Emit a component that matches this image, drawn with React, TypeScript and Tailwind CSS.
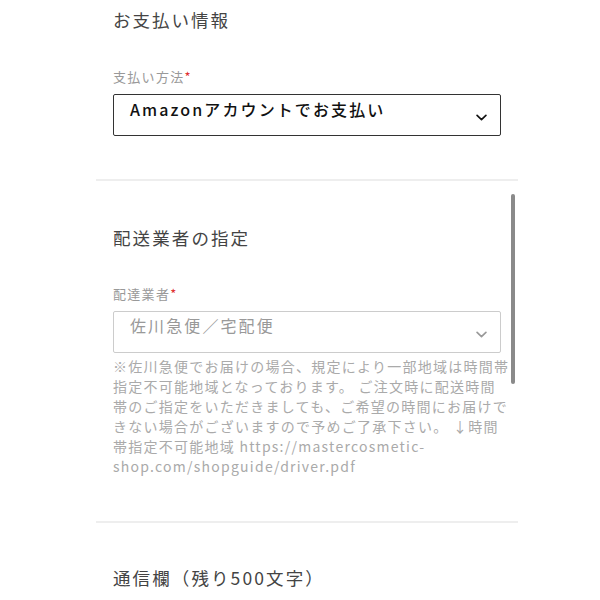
const Chevron = ({ className }: { className: string }) => (
  <svg viewBox="0 0 12 7" width="11" height="7" fill="none" className={className}>
    <path d="M1.2 1.2l4.8 4.6 4.8-4.6" stroke="currentColor" strokeWidth="1.8" strokeLinecap="round" strokeLinejoin="round" />
  </svg>
);

const Required = () => <span className="text-[#e03131]">*</span>;

export default function App() {
  return (
    <div
      className="relative h-[600px] w-[600px] overflow-hidden bg-white text-[#444]"
      style={{ fontFamily: '"Noto Sans CJK JP", "Noto Sans", sans-serif' }}
    >
      <div className="ml-[96px] w-[422px]">
        {/* payment */}
        <section className="px-[17px] pt-[8px] pb-[43px]">
          <h2 className="text-[17.5px] leading-[24px] tracking-[2px] text-[#444]">お支払い情報</h2>
          <div className="mt-[36px] text-[13px] leading-[18px] tracking-[0.1em] text-[#999]">
            支払い方法<Required />
          </div>
          <div className="mt-[8px] flex h-[42px] items-start justify-between rounded-[2px] border border-[#333] pl-[16px] pr-[13px]">
            <span className="pt-[2px] text-[16px] font-medium leading-[24px] tracking-[2.1px] text-[#111]">
              Amazonアカウントでお支払い
            </span>
            <Chevron className="self-center mt-[4px] text-[#111]" />
          </div>
        </section>

        <div className="h-[2px] bg-[#eeeeee]" />

        {/* delivery */}
        <section className="px-[17px] pt-[45px] pb-[45px]">
          <h2 className="text-[17.5px] leading-[24px] tracking-[2.1px] text-[#444]">配送業者の指定</h2>
          <div className="mt-[35px] text-[13px] leading-[18px] tracking-[0.1em] text-[#999]">
            配達業者<Required />
          </div>
          <div className="mt-[8px] flex h-[42px] items-start justify-between rounded-[2px] border border-[#ccc] pl-[16px] pr-[13px]">
            <span className="pt-[1px] text-[16px] leading-[24px] tracking-[2.1px] text-[#999]">佐川急便／宅配便</span>
            <Chevron className="self-center mt-[4px] text-[#999]" />
          </div>
          <p className="-mr-[12px] mt-[3px] text-[14px] leading-[20px] tracking-[1.25px] text-[#aaa] [text-spacing-trim:space-all]">
            ※佐川急便でお届けの場合、規定により一部地域は時間帯
            <br />
            指定不可能地域となっております。 ご注文時に配送時間
            <br />
            帯のご指定をいただきましても、ご希望の時間にお届けで
            <br />
            きない場合がございますので予めご了承下さい。 ↓時間
            <br />
            帯指定不可能地域 https://mastercosmetic-
            <br />
            shop.com/shopguide/driver.pdf
          </p>
        </section>

        <div className="h-[2px] bg-[#eeeeee]" />

        {/* message */}
        <section className="px-[17px] pt-[43px]">
          <h2 className="text-[17.5px] leading-[24px] tracking-[2.1px] text-[#444]">通信欄（残り500文字）</h2>
        </section>
      </div>

      {/* scroll indicator */}
      <div className="absolute left-[511px] top-[194px] h-[190px] w-[4px] rounded-full bg-[#8a8a8a]" />
    </div>
  );
}
